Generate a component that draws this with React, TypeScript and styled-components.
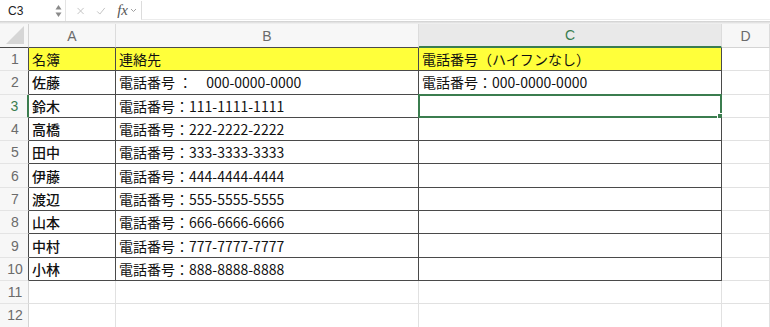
import styled, { createGlobalStyle, css } from "styled-components";

const GlobalStyle = createGlobalStyle`
  html, body {
    margin: 0;
    padding: 0;
    background: #ffffff;
    overflow: hidden;
  }
  body {
    font-family: "Noto Sans CJK JP", "Noto Sans", sans-serif;
  }
`;

const GREEN = "#3b7d4f";
const GRID = "#e1e1e1";
const LINE = "#4a4a4a";

const columns = ["A", "B", "C", "D"];

const rows: string[][] = [
  ["名簿", "連絡先", "電話番号（ハイフンなし）"],
  ["佐藤", "電話番号 ：　000-0000-0000", "電話番号：000-0000-0000"],
  ["鈴木", "電話番号：111-1111-1111", ""],
  ["高橋", "電話番号：222-2222-2222", ""],
  ["田中", "電話番号：333-3333-3333", ""],
  ["伊藤", "電話番号：444-4444-4444", ""],
  ["渡辺", "電話番号：555-5555-5555", ""],
  ["山本", "電話番号：666-6666-6666", ""],
  ["中村", "電話番号：777-7777-7777", ""],
  ["小林", "電話番号：888-8888-8888", ""],
  ["", "", ""],
  ["", "", ""],
];

const SELECTED_ROW = 3;
const SELECTED_COL = 2;

export default function App() {
  return (
    <>
      <GlobalStyle />
      <Page>
        <FormulaBar>
          <NameBox>
            <NameText>C3</NameText>
            <Stepper>
              <svg width="7" height="14" viewBox="0 0 7 14">
                <path d="M3.5 1 L6.5 5.5 L0.5 5.5 Z" fill="#8a8a8a" />
                <path d="M3.5 13 L6.5 8.5 L0.5 8.5 Z" fill="#8a8a8a" />
              </svg>
            </Stepper>
          </NameBox>
          <Actions>
            <svg width="12" height="12" viewBox="0 0 12 12">
              <path d="M2 2 L10 10 M10 2 L2 10" stroke="#c4c4c4" strokeWidth="1.3" />
            </svg>
            <svg width="13" height="12" viewBox="0 0 13 12">
              <path d="M1.5 6.5 L5 10 L11.5 2" stroke="#c4c4c4" strokeWidth="1.3" fill="none" />
            </svg>
            <Fx>
              fx
              <svg width="7" height="5" viewBox="0 0 7 5">
                <path d="M1 1 L3.5 3.5 L6 1" stroke="#a0a0a0" strokeWidth="1" fill="none" />
              </svg>
            </Fx>
          </Actions>
          <FormulaInput />
        </FormulaBar>
        <Divider />
        <Grid>
          <Corner>
            <svg width="22" height="20" viewBox="0 0 22 20">
              <path d="M21 1 L21 19 L3 19 Z" fill="#d6d6d6" />
            </svg>
          </Corner>
          {columns.map((c, ci) => (
            <ColHeader key={c} $active={ci === SELECTED_COL} $boxed={ci < 3}>
              {c}
            </ColHeader>
          ))}
          {rows.map((r, ri) => {
            const rowNo = ri + 1;
            const inTable = rowNo <= 10;
            return [
              <RowHeader
                key={`h${rowNo}`}
                $active={rowNo === SELECTED_ROW}
                $boxed={inTable}
              >
                {rowNo}
              </RowHeader>,
              ...r.map((val, ci) => (
                <Cell
                  key={`c${rowNo}-${ci}`}
                  $boxed={inTable}
                  $head={rowNo === 1}
                  $bold={ci === 0 && rowNo > 1}
                >
                  {val}
                  {rowNo === SELECTED_ROW && ci === SELECTED_COL && (
                    <Selection>
                      <Handle />
                    </Selection>
                  )}
                </Cell>
              )),
              <Cell key={`d${rowNo}`} $boxed={false} $head={false} $bold={false} />,
            ];
          })}
        </Grid>
      </Page>
    </>
  );
}

const Page = styled.div`
  width: 770px;
  height: 327px;
  overflow: hidden;
  background: #fff;
`;

const FormulaBar = styled.div`
  display: flex;
  align-items: center;
  height: 21px;
  background: #ffffff;
`;

const NameBox = styled.div`
  display: flex;
  align-items: center;
  justify-content: space-between;
  width: 66px;
  height: 21px;
  box-sizing: border-box;
  padding: 0 3px 0 8px;
  border-right: 1px solid #e4e4e4;
`;

const NameText = styled.span`
  font-family: "Liberation Sans", Arial, sans-serif;
  font-size: 12px;
  color: #222;
`;

const Stepper = styled.span`
  display: flex;
  align-items: center;
`;

const Actions = styled.div`
  display: flex;
  align-items: center;
  gap: 11px;
  padding: 0 4px 0 10px;
  width: 75px;
  box-sizing: border-box;
`;

const Fx = styled.span`
  display: flex;
  align-items: center;
  gap: 2px;
  font-family: "Liberation Serif", "Times New Roman", serif;
  font-style: italic;
  font-size: 15px;
  color: #555;
`;

const FormulaInput = styled.div`
  flex: 1;
  height: 18px;
  border-left: 1px solid #dcdcdc;
  border-bottom: 1px solid #ececec;
`;

const Divider = styled.div`
  height: 3px;
  background: linear-gradient(#cfcfcf, #e6e6e6 60%, #f4f4f4);
`;

const Grid = styled.div`
  display: grid;
  grid-template-columns: 29px 87px 303px 303px 1fr;
  grid-template-rows: 24px repeat(12, 23.3px);
`;

const headerBase = css`
  box-sizing: border-box;
  background: #f7f7f7;
  color: #6b6b6b;
  font-family: "Liberation Sans", Arial, sans-serif;
  display: flex;
  align-items: center;
  justify-content: center;
`;

const Corner = styled.div`
  ${headerBase};
  align-items: flex-end;
  justify-content: flex-end;
  padding: 0 3px 2px 0;
  border-right: 1px solid #d4d4d4;
  border-bottom: 1px solid ${LINE};
`;

const ColHeader = styled.div<{ $active: boolean; $boxed: boolean }>`
  ${headerBase};
  font-size: 14px;
  border-right: 1px solid #dcdcdc;
  border-bottom: 1px solid ${({ $boxed }) => ($boxed ? LINE : "#d4d4d4")};
  ${({ $active }) =>
    $active &&
    css`
      background: #e9e9e9;
      color: ${GREEN};
      border-bottom: 2px solid ${GREEN};
    `}
`;

const RowHeader = styled.div<{ $active: boolean; $boxed: boolean }>`
  ${headerBase};
  font-size: 14px;
  padding-left: 2px;
  border-bottom: 1px solid #e4e4e4;
  border-right: 1px solid ${({ $boxed }) => ($boxed ? LINE : "#d4d4d4")};
  ${({ $active }) =>
    $active &&
    css`
      color: ${GREEN};
      border-right: 2px solid ${GREEN};
    `}
`;

const Cell = styled.div<{ $boxed: boolean; $head: boolean; $bold: boolean }>`
  position: relative;
  box-sizing: border-box;
  display: flex;
  align-items: center;
  padding: 0 3px;
  white-space: pre;
  overflow: visible;
  font-size: 14px;
  color: #111;
  font-weight: ${({ $bold }) => ($bold ? 500 : 400)};
  background: ${({ $head }) => ($head ? "#ffff3a" : "#fff")};
  border-right: 1px solid ${({ $boxed }) => ($boxed ? LINE : GRID)};
  border-bottom: 1px solid ${({ $boxed }) => ($boxed ? LINE : GRID)};
`;

const Selection = styled.div`
  position: absolute;
  left: -1px;
  top: -1px;
  right: -1px;
  bottom: -1px;
  border: 2px solid ${GREEN};
  pointer-events: none;
`;

const Handle = styled.div`
  position: absolute;
  right: -4px;
  bottom: -4px;
  width: 5px;
  height: 5px;
  background: ${GREEN};
  border: 1px solid #fff;
`;
